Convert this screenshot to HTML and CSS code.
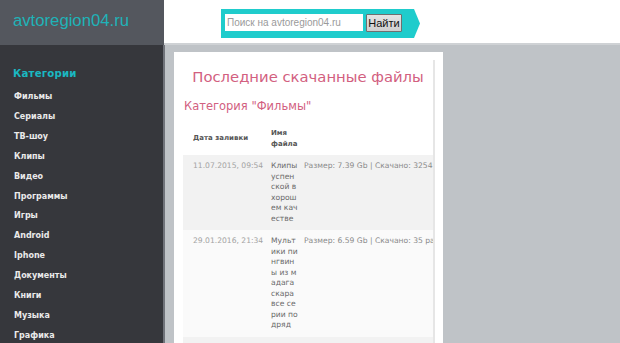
FILE: index.html
```html
<!DOCTYPE html>
<html lang="ru">
<head>
<meta charset="utf-8">
<title>avtoregion04.ru</title>
<link rel="stylesheet" href="styles.css">
</head>
<body>
<div class="page">
  <header class="top">
    <div class="brand"><a class="logo" href="#">avtoregion04.ru</a></div>
    <div class="search-wrap">
      <form class="search">
        <input class="search-input" type="text" placeholder="Поиск на avtoregion04.ru">
        <button class="search-btn" type="button">Найти</button>
      </form>
    </div>
  </header>
  <div class="layout">
    <aside class="sidebar">
      <h3 class="side-title">Категории</h3>
      <ul class="side-menu">
        <li>Фильмы</li>
        <li>Сериалы</li>
        <li>ТВ-шоу</li>
        <li>Клипы</li>
        <li>Видео</li>
        <li>Программы</li>
        <li>Игры</li>
        <li>Android</li>
        <li>Iphone</li>
        <li>Документы</li>
        <li>Книги</li>
        <li>Музыка</li>
        <li>Графика</li>
      </ul>
    </aside>
    <main class="content">
      <div class="card">
        <div class="inner">
          <h1 class="title">Последние скачанные файлы</h1>
          <h2 class="cat">Категория "Фильмы"</h2>
          <table class="files">
            <colgroup><col class="c1"><col class="c2"><col class="c3"></colgroup>
            <thead>
              <tr><th>Дата заливки</th><th>Имя файла</th><th></th></tr>
            </thead>
            <tbody>
              <tr>
                <td class="date">11.07.2015, 09:54</td>
                <td class="name">Клипы успенской в хорошем качестве</td>
                <td class="info">Размер: 7.39 Gb | Скачано: 3254 раз</td>
              </tr>
              <tr>
                <td class="date">29.01.2016, 21:34</td>
                <td class="name">Мультики пингвины из мадагаскара все серии подряд</td>
                <td class="info">Размер: 6.59 Gb | Скачано: 35 раз</td>
              </tr>
              <tr>
                <td class="date">&nbsp;</td>
                <td class="name">&nbsp;</td>
                <td class="info">&nbsp;</td>
              </tr>
            </tbody>
          </table>
        </div>
      </div>
    </main>
  </div>
</div>
</body>
</html>
```
FILE: styles.css
```css
html, body {
  margin: 0;
  padding: 0;
}
body {
  font-family: "DejaVu Sans", sans-serif;
  background: #bfc3c7;
}
.page {
  height: 100vh;
  overflow: hidden;
  display: flex;
  flex-direction: column;
}
.top {
  display: flex;
  height: 45px;
  flex-shrink: 0;
}
.brand {
  width: 164px;
  flex-shrink: 0;
  background: #54575e;
  padding: 11px 0 0 13px;
  box-sizing: border-box;
}
.logo {
  font-family: "Liberation Sans", Arial, sans-serif;
  font-size: 16.7px;
  color: #1fb3b8;
  text-decoration: none;
  line-height: 20px;
}
.search-wrap {
  flex: 1;
  background: #fff;
  border-bottom: 2px solid #cfd2d5;
  padding: 9px 0 0 57px;
}
.search {
  display: flex;
  align-items: flex-start;
  width: 199px;
  height: 29px;
  box-sizing: border-box;
  padding: 5px 0 0 4px;
  margin: 0;
  background: #1fcccc;
  clip-path: polygon(0 0, 193px 0, 100% 50%, 193px 100%, 0 100%);
}
.search-input {
  width: 138px;
  height: 17px;
  box-sizing: border-box;
  border: none;
  padding: 0 2px;
  margin: 0;
  font-family: "Liberation Sans", Arial, sans-serif;
  font-size: 10px;
  color: #333;
  background: #fff;
  outline: none;
}
.search-input::placeholder {
  color: #9a9a9a;
}
.search-btn {
  margin: 0 0 0 3px;
  width: 36px;
  height: 18px;
  box-sizing: border-box;
  padding: 0;
  border: 1px solid #6f6f6f;
  border-radius: 1px;
  background: linear-gradient(#e4e4e4, #cfcfcf);
  font-family: "Liberation Sans", Arial, sans-serif;
  font-size: 11px;
  color: #111;
}
.layout {
  flex: 1;
  display: flex;
  min-height: 0;
}
.sidebar {
  width: 165px;
  flex-shrink: 0;
  background: #36373c;
  border-right: 2px solid #70737a;
  padding: 22px 0 0 13px;
  box-sizing: border-box;
}
.side-title {
  margin: 0;
  font-size: 10.2px;
  line-height: 14px;
  font-weight: bold;
  color: #1ab8c2;
  letter-spacing: 0.2px;
}
.side-menu {
  list-style: none;
  margin: 6px 0 0 1px;
  padding: 0;
}
.side-menu li {
  font-size: 8px;
  font-weight: bold;
  color: #eaeaea;
  line-height: 19.9px;
}
.content {
  flex: 1;
  padding: 7px 0 0 9px;
  min-width: 0;
}
.card {
  width: 269px;
  height: 100%;
  background: #fff;
  box-sizing: border-box;
  padding: 8px 8px 0 9px;
}
.inner {
  height: 100%;
  overflow: hidden;
  border-right: 2px solid #e6e6e6;
}
.title {
  margin: 8px 0 0;
  font-size: 14.8px;
  line-height: 18px;
  font-weight: normal;
  color: #d2607f;
  text-align: center;
  white-space: nowrap;
}
.cat {
  margin: 13px 0 0 1px;
  font-size: 11.5px;
  line-height: 14px;
  font-weight: normal;
  color: #d2607f;
}
.files {
  margin-top: 9px;
  width: 420px;
  table-layout: fixed;
  border-collapse: collapse;
  font-size: 7.6px;
}
.c1 { width: 85px; }
.c2 { width: 33px; }
.files th {
  text-align: left;
  font-size: 7px;
  font-weight: bold;
  color: #555;
  line-height: 11px;
  padding: 5.5px 3px;
  vertical-align: middle;
}
.files th:first-child,
.files td:first-child {
  padding-left: 10px;
}
.files td {
  vertical-align: top;
  line-height: 10.5px;
  padding: 6px 3px;
}
.files tbody tr:nth-child(odd) { background: #f2f2f2; }
.files tbody tr:nth-child(even) { background: #fafafa; }
.date { color: #a3a3a3; white-space: nowrap; }
.name { color: #6a6a6a; word-break: break-all; }
.info { color: #8a8a8a; white-space: nowrap; }
```
